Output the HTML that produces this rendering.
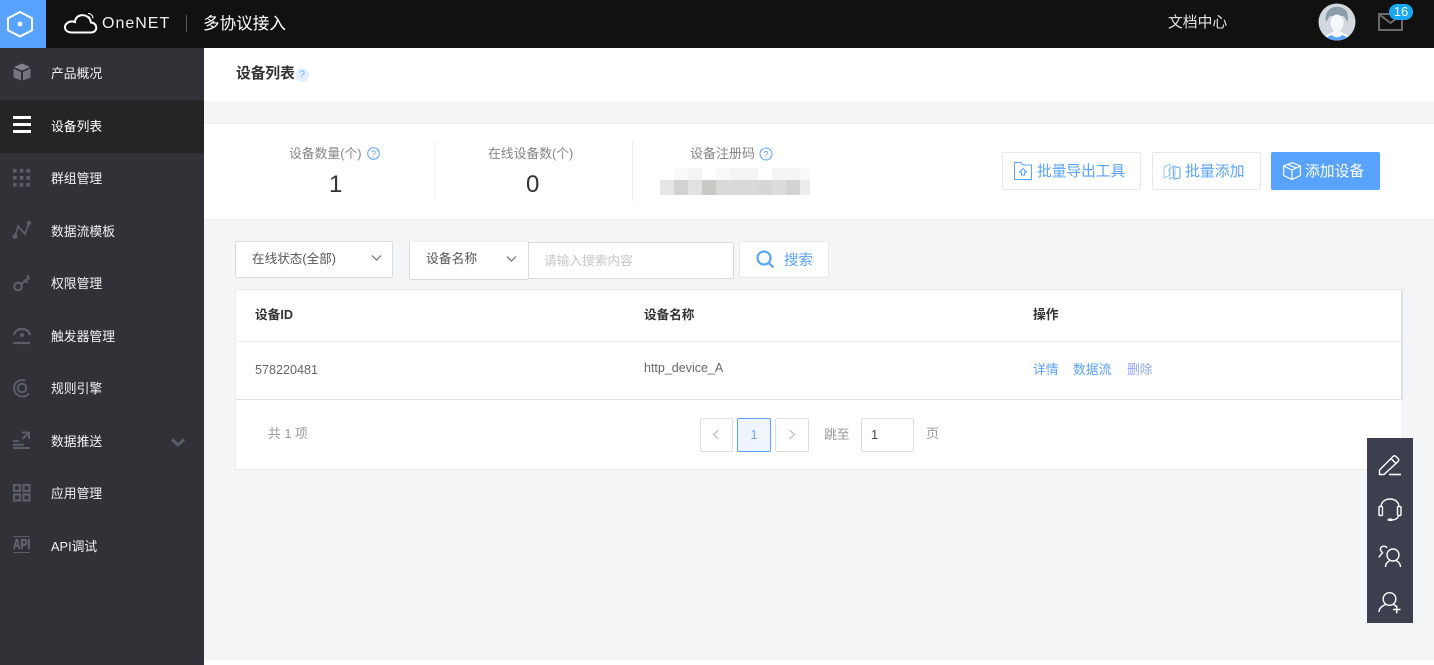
<!DOCTYPE html>
<html lang="zh">
<head>
<meta charset="utf-8">
<title>设备列表</title>
<style>
*{box-sizing:border-box}
html,body{margin:0;padding:0;width:1434px;height:665px;overflow:hidden;background:#f4f5f7}
body{position:relative;font-family:"Liberation Sans","Noto Sans CJK SC",sans-serif;font-size:12.8px;color:#333}
.a{position:absolute}
.t{position:absolute;white-space:nowrap;line-height:20px;height:20px}
.nav{position:absolute;left:51px;color:#f2f2f4;font-size:12.8px;line-height:20px;white-space:nowrap}
svg{position:absolute;overflow:visible}
.box{position:absolute;background:#fff;border:1px solid #e6e8ec;border-radius:2px}
</style>
</head>
<body>
<!-- top bar -->
<div class="a" style="left:0;top:0;width:1434px;height:48px;background:#111112"></div>
<div class="a" style="left:0;top:0;width:46px;height:48px;background:#58a3ff"></div>
<svg style="left:0;top:0" width="46" height="48" fill="none"><path d="M20 12 32 18.200V30.300L20 36.500 8 30.300V18.200Z" stroke="#fff" stroke-width="2"/><circle cx="20" cy="24" r="2.400" fill="#fff"/></svg>
<svg style="left:64px;top:12px" width="36" height="22" fill="none" stroke="#fff" stroke-width="2"><path d="M8 20.500H27C34 20.500 34 11 27 10.500 26 5 21 2 16 3.500 12.500 4.500 11 7.500 11 10 5 8 .5 12 1 16 1.500 19 4.500 20.500 8 20.500Z"/><path d="M24 1.500C27 1.500 29 3.500 29 6.500" stroke-width="1"/><path d="M23.500 4.500C25 4.500 26 5.500 26 7" stroke-width="1"/></svg>
<div class="t" style="left:102px;top:14px;color:#f0f0f0;font-size:16px;letter-spacing:1px">OneNET</div>
<div class="a" style="left:186px;top:15px;width:1px;height:17px;background:#55565a"></div>
<div class="t" style="left:203px;top:14px;color:#fff;font-size:16.600px">多协议接入</div>
<div class="t" style="left:1168px;top:13px;color:#e2e2e2;font-size:14.800px">文档中心</div>
<!-- avatar -->
<svg style="left:1318px;top:3px" width="38" height="38">
<defs><clipPath id="av"><circle cx="19" cy="19" r="18.500"/></clipPath></defs>
<g clip-path="url(#av)"><rect width="38" height="38" fill="#d3d8de"/>
<path d="M8 19C6 8 13 3 21 4 29 5 31 11 29.500 19L26 13 12 13Z" fill="#8a9dab"/>
<ellipse cx="19" cy="20" rx="6.500" ry="8.500" fill="#f5f8fb"/>
<path d="M5 38C6 32 12 31 16 28H22C26 31 32 32 33 38Z" fill="#f5f8fb"/>
<path d="M7 38C8 34 11 33 14 32 16 35 22 35 24 32 27 33 30 34 31 38Z" fill="#58a3ff"/></g></svg>
<!-- mail -->
<svg style="left:1378px;top:12px" width="26" height="20" fill="none" stroke="#6b6b6b" stroke-width="2"><rect x="1" y="2" width="23" height="16"/><path d="M2 3 12.500 11 23 3"/></svg>
<div class="a" style="left:1389px;top:4px;width:24px;height:16px;border-radius:8px;background:#16aaf5;color:#fff;font-size:13px;line-height:15px;text-align:center">16</div>

<!-- sidebar -->
<div class="a" style="left:0;top:48px;width:204px;height:617px;background:#313137"></div>
<div class="a" style="left:0;top:101px;width:204px;height:52px;background:#252525"></div>
<div class="a" style="left:0;top:100px;width:204px;height:1px;background:#2a2a2e"></div>

<svg style="left:13px;top:63px" width="18" height="18" fill="#72757f"><path d="M9 .5 17 4 9 7.500 1 4Z" fill="#82858e"/><path d="M.500 5.500 8 9V17.500L.500 14.500Z"/><path d="M17.500 5.500 10 9V17.500L17.500 14.500Z"/></svg>
<div class="nav" style="top:64px">产品概况</div>

<svg style="left:13px;top:116px" width="18" height="18" fill="#fff"><rect width="18" height="3" y="0"/><rect width="18" height="3" y="7"/><rect width="18" height="3" y="14"/></svg>
<div class="nav" style="top:117px;color:#fff">设备列表</div>

<svg style="left:13px;top:169px" width="18" height="18" fill="#5b5e68"><rect x="0" y="0" width="3.600" height="3.600"/><rect x="6.700" y="0" width="3.600" height="3.600"/><rect x="13.400" y="0" width="3.600" height="3.600"/><rect x="0" y="7" width="3.600" height="3.600"/><rect x="6.700" y="7" width="3.600" height="3.600"/><rect x="13.400" y="7" width="3.600" height="3.600"/><rect x="0" y="14" width="3.600" height="3.600"/><rect x="6.700" y="14" width="3.600" height="3.600"/><rect x="13.400" y="14" width="3.600" height="3.600"/></svg>
<div class="nav" style="top:169px">群组管理</div>

<svg style="left:13px;top:221px" width="18" height="18" fill="#5b5e68" stroke="#5b5e68" stroke-width="1.800"><path d="M2 16 5 5 12 13 16 2" fill="none"/><circle cx="2" cy="15.500" r="1.600"/><circle cx="16" cy="2" r="1.200"/></svg>
<div class="nav" style="top:222px">数据流模板</div>

<svg style="left:13px;top:274px" width="18" height="18" fill="none" stroke="#5b5e68" stroke-width="2.200"><circle cx="5" cy="12.500" r="3.800"/><path d="M8 10 16.500 3.500M12.500 6.500 14.500 9M15 4.500 15 1"/></svg>
<div class="nav" style="top:274px">权限管理</div>

<svg style="left:13px;top:326px" width="18" height="18" fill="none" stroke="#5b5e68" stroke-width="2.200"><path d="M1 9C2 5 5 3 9 3S16 5 17 9"/><circle cx="9" cy="9" r="2" fill="#5b5e68" stroke="none"/><path d="M0 17H17"/></svg>
<div class="nav" style="top:327px">触发器管理</div>

<svg style="left:13px;top:379px" width="18" height="18" fill="none" stroke="#5b5e68" stroke-width="2"><path d="M12 1.500C6 -.5 1 3.500 1 9.500 1 14 5 17.500 9.500 17.500 12 17.500 14.500 16.500 16 14.500"/><circle cx="9" cy="9" r="4.300"/></svg>
<div class="nav" style="top:379px">规则引擎</div>

<svg style="left:13px;top:431px" width="18" height="18" fill="none" stroke="#5b5e68" stroke-width="2"><path d="M0 10H6M0 17H17M0 13.800H11"/><path d="M9 1.500H16V8M16 1.500 9.500 8"/></svg>
<div class="nav" style="top:432px">数据推送</div>
<svg style="left:171px;top:438px" width="14" height="9" fill="none" stroke="#5b5e68" stroke-width="3"><path d="M1 1.500 7 7 13 1.500"/></svg>

<svg style="left:13px;top:484px" width="18" height="18" fill="none" stroke="#5b5e68" stroke-width="2.200"><rect x="1" y="1" width="6" height="6"/><rect x="10.500" y="1" width="6" height="6"/><rect x="1" y="10.500" width="6" height="6"/><rect x="10.500" y="10.500" width="6" height="6"/></svg>
<div class="nav" style="top:484px">应用管理</div>

<div class="a" style="left:13px;top:536px;width:17px;height:1px;background:#5b5e68"></div>
<div class="a" style="left:13px;top:552px;width:17px;height:1px;background:#5b5e68"></div>
<div class="t" style="left:13px;top:534px;color:#62656f;font-size:15px;font-weight:bold;line-height:21px;transform:scaleX(.69);transform-origin:0 50%;-webkit-text-stroke:.5px #62656f">API</div>
<div class="nav" style="top:537px">API调试</div>

<!-- page header -->
<div class="a" style="left:204px;top:48px;width:1230px;height:53px;background:#fff"></div>
<div class="t" style="left:236px;top:64px;font-weight:bold;font-size:14.700px;color:#333">设备列表</div>
<div class="a" style="left:295px;top:68px;width:14px;height:14px;border-radius:50%;background:#e3effd;color:#7db0f5;font-size:11px;line-height:14px;text-align:center">?</div>

<!-- stats panel -->
<div class="a" style="left:204px;top:123px;width:1230px;height:97px;background:#fff;border-top:1px solid #eceef1;border-bottom:1px solid #eceef1"></div>
<div class="t" style="left:289px;top:144px;color:#85868a;font-size:12.800px">设备数量(个)</div>
<svg style="left:367px;top:147px" width="13" height="13" fill="none"><circle cx="6.500" cy="6.500" r="5.800" stroke="#58a3ff"/><text x="6.500" y="10" text-anchor="middle" font-size="9" fill="#58a3ff" font-family="Liberation Sans">?</text></svg>
<div class="t" style="left:329px;top:174px;color:#333;font-size:24px;line-height:22px;height:22px">1</div>
<div class="a" style="left:434px;top:141px;width:1px;height:60px;background:#f0f1f3"></div>
<div class="t" style="left:488px;top:144px;color:#85868a;font-size:12.800px">在线设备数(个)</div>
<div class="t" style="left:526px;top:174px;color:#333;font-size:24px;line-height:22px;height:22px">0</div>
<div class="a" style="left:632px;top:141px;width:1px;height:60px;background:#f0f1f3"></div>
<div class="t" style="left:690px;top:144px;color:#85868a;font-size:13px">设备注册码</div>
<svg style="left:759px;top:147px" width="14" height="14" fill="none"><circle cx="7" cy="7" r="6" stroke="#58a3ff"/><text x="7" y="10.500" text-anchor="middle" font-size="9" fill="#58a3ff" font-family="Liberation Sans">?</text></svg>
<!-- blurred code -->
<svg style="left:634px;top:168px" width="176" height="27" shape-rendering="crispEdges">
<rect x="40" y="0" width="14" height="12" fill="#fafafa"/><rect x="54" y="0" width="14" height="12" fill="#f3f4f4"/><rect x="82" y="0" width="14" height="12" fill="#f9f9f9"/><rect x="96" y="0" width="28" height="12" fill="#f4f4f4"/><rect x="138" y="0" width="28" height="12" fill="#f5f5f5"/><rect x="166" y="0" width="10" height="12" fill="#fafafa"/>
<rect x="26" y="12" width="14" height="15" fill="#e5e5e5"/><rect x="40" y="12" width="14" height="15" fill="#d2d2d2"/><rect x="54" y="12" width="14" height="15" fill="#e2e2e2"/><rect x="68" y="12" width="14" height="15" fill="#c9c9c5"/><rect x="82" y="12" width="42" height="15" fill="#d9d9d9"/><rect x="124" y="12" width="14" height="15" fill="#d6d6d6"/><rect x="138" y="12" width="14" height="15" fill="#dcdcdc"/><rect x="152" y="12" width="14" height="15" fill="#d3d4d2"/><rect x="166" y="12" width="10" height="15" fill="#ececec"/>
</svg>

<!-- action buttons -->
<div class="box" style="left:1002px;top:152px;width:139px;height:38px"></div>
<svg style="left:1014px;top:162px" width="18" height="18" fill="none" stroke="#58a3ff" stroke-width="1"><path d="M.500 .500H7L9 3H17.500V17.500H.500Z"/><path d="M9 6.500 5.500 10H7.500V13H10.500V10H12.500Z"/></svg>
<div class="t" style="left:1037px;top:162px;color:#58a3ff;font-size:14.700px">批量导出工具</div>
<div class="box" style="left:1152px;top:152px;width:109px;height:38px"></div>
<svg style="left:1163px;top:163px" width="18" height="17" fill="none" stroke="#9cc5f8" stroke-width="1"><path d="M1 4 7 1V12L1 15Z"/><path d="M10 3 17 5V15L11 16Z" stroke="#58a3ff"/><path d="M6 6 12 3V13L7 16Z"/></svg>
<div class="t" style="left:1185px;top:162px;color:#58a3ff;font-size:14.900px">批量添加</div>
<div class="a" style="left:1271px;top:152px;width:109px;height:38px;background:#58a3ff;border-radius:2px"></div>
<svg style="left:1283px;top:162px" width="18" height="18" fill="none" stroke="#fff" stroke-width="1.200"><path d="M9 .6 17.400 4V13.500L9 17.500 .6 13.500V4Z"/><path d="M.6 4 9 8 17.400 4M9 8V17.500M4.800 2.300 13 6"/></svg>
<div class="t" style="left:1305px;top:162px;color:#fff;font-size:14.800px">添加设备</div>

<!-- filters -->
<div class="a" style="left:235px;top:241px;width:158px;height:37px;background:#fff;border:1px solid #d9dbe0;border-radius:2px"></div>
<div class="t" style="left:252px;top:249px;color:#555;font-size:12.600px">在线状态(全部)</div>
<svg style="left:371px;top:254px" width="11" height="8" fill="none" stroke="#6a6d74" stroke-width="1.200"><path d="M1 1.500 5.500 6 10 1.500"/></svg>
<div class="a" style="left:409px;top:241px;width:120px;height:39px;background:#fff;border:1px solid #d9dbe0;border-top-color:#eceef1;border-radius:2px"></div>
<div class="t" style="left:426px;top:249px;color:#555;font-size:12.800px">设备名称</div>
<svg style="left:506px;top:255px" width="11" height="8" fill="none" stroke="#6a6d74" stroke-width="1.200"><path d="M1 1.500 5.500 6 10 1.500"/></svg>
<div class="a" style="left:528px;top:242px;width:206px;height:37px;background:#fff;border:1px solid #d9dbe0;border-radius:2px"></div>
<div class="t" style="left:544px;top:251px;color:#c4c6cb;font-size:12.700px">请输入搜索内容</div>
<div class="box" style="left:739px;top:241px;width:90px;height:37px"></div>
<svg style="left:756px;top:250px" width="20" height="20" fill="none" stroke="#58a3ff" stroke-width="2.200"><circle cx="8" cy="8" r="6.500"/><path d="M12.800 12.800 17.500 17.500"/></svg>
<div class="t" style="left:784px;top:251px;color:#58a3ff;font-size:14.500px">搜索</div>

<!-- table -->
<div class="a" style="left:235px;top:289px;width:1168px;height:181px;background:#fff;border:1px solid #e8eaee;border-right-color:#eceef0"></div>
<div class="a" style="left:1401px;top:290px;width:2px;height:110px;background:#dfe0e3"></div>
<div class="a" style="left:236px;top:341px;width:1165px;height:1px;background:#eceef1"></div>
<div class="a" style="left:236px;top:399px;width:1166px;height:1px;background:#dfe0e3"></div>
<div class="t" style="left:255px;top:305px;font-weight:bold;color:#333;font-size:12.700px">设备ID</div>
<div class="t" style="left:644px;top:305px;font-weight:bold;color:#333;font-size:12.600px">设备名称</div>
<div class="t" style="left:1033px;top:305px;font-weight:bold;color:#333;font-size:12.800px">操作</div>
<div class="t" style="left:255px;top:360px;color:#666;font-size:12.600px">578220481</div>
<div class="t" style="left:644px;top:358px;color:#666;font-size:12.500px">http_device_A</div>
<div class="t" style="left:1033px;top:360px;color:#58a3ff;font-size:12.800px">详情</div>
<div class="t" style="left:1073px;top:360px;color:#58a3ff;font-size:12.800px">数据流</div>
<div class="t" style="left:1127px;top:360px;color:#8fa9ff;font-size:12.800px">删除</div>

<!-- pagination -->
<div class="t" style="left:268px;top:424px;color:#999;font-size:12.800px">共 1 项</div>
<div class="a" style="left:700px;top:418px;width:33px;height:34px;border:1px solid #dcdee2;border-radius:2px;background:#fff"></div>
<svg style="left:712px;top:429px" width="8" height="11" fill="none" stroke="#c4c6ca" stroke-width="1.500"><path d="M6.500 1 1.500 5.500 6.500 10"/></svg>
<div class="a" style="left:737px;top:418px;width:34px;height:34px;border:1px solid #58a3ff;border-radius:2px;background:#eef5ff;color:#7d9ef5;font-size:13px;line-height:31px;text-align:center">1</div>
<div class="a" style="left:775px;top:418px;width:34px;height:34px;border:1px solid #dcdee2;border-radius:2px;background:#fff"></div>
<svg style="left:788px;top:429px" width="8" height="11" fill="none" stroke="#c4c6ca" stroke-width="1.500"><path d="M1.500 1 6.500 5.500 1.500 10"/></svg>
<div class="t" style="left:824px;top:425px;color:#999;font-size:12.800px">跳至</div>
<div class="a" style="left:861px;top:418px;width:53px;height:34px;border:1px solid #dcdee2;border-radius:2px;background:#fff;color:#444a66;font-size:13px;line-height:31px;padding-left:9px">1</div>
<div class="t" style="left:926px;top:424px;color:#999;font-size:13px">页</div>

<!-- footer band -->
<div class="a" style="left:204px;top:660px;width:1230px;height:5px;background:#fff"></div>

<!-- floating toolbar -->
<div class="a" style="left:1367px;top:438px;width:46px;height:185px;background:#3b3f4e"></div>
<svg style="left:1378px;top:453px" width="24" height="22" fill="none" stroke="#fff" stroke-width="1.400"><path d="M1.500 21.500V17L15 3.500C16 2.500 17 2.500 18 3.500L20 5.500C21 6.500 21 7.500 20 8.500L6 21.500Z"/><path d="M13 5.500 18 10.500"/><path d="M11 21.500H23" stroke-width="1.600"/></svg>
<svg style="left:1378px;top:498px" width="24" height="24" fill="none" stroke="#fff" stroke-width="1.400"><path d="M3 9C3 4 7 1 12 1S21 4 21 9"/><rect x="1" y="8.500" width="3.500" height="9" rx="1"/><rect x="19.500" y="8.500" width="3.500" height="9" rx="1"/><path d="M20.500 17C20.500 20.500 17 22 13 22"/><rect x="9.500" y="20.500" width="5" height="2.500" rx="1.200" fill="#fff" stroke="none"/></svg>
<svg style="left:1378px;top:544px" width="24" height="24" fill="none" stroke="#fff" stroke-width="1.400"><circle cx="15" cy="11" r="6"/><path d="M7.500 23C7.500 19 10 17.500 12 16.500M22.500 23C22.500 19 20 17.500 18 16.500"/><path d="M9 4C8 1.500 3.500 1.500 2.500 4.500 2 7 4 8 4.500 9 3.500 10 1.500 11.500 1 13.500"/></svg>
<svg style="left:1378px;top:590px" width="24" height="24" fill="none" stroke="#fff" stroke-width="1.400"><circle cx="11.500" cy="9" r="6.300"/><path d="M1 22C1 18.500 4 16 7.500 14.500M15.500 14.500C16.500 15 17.500 15.500 18.500 16.500"/><path d="M15 19.500H22.500M18.700 15.800V23.300" stroke-width="1.600"/></svg>
</body>
</html>
